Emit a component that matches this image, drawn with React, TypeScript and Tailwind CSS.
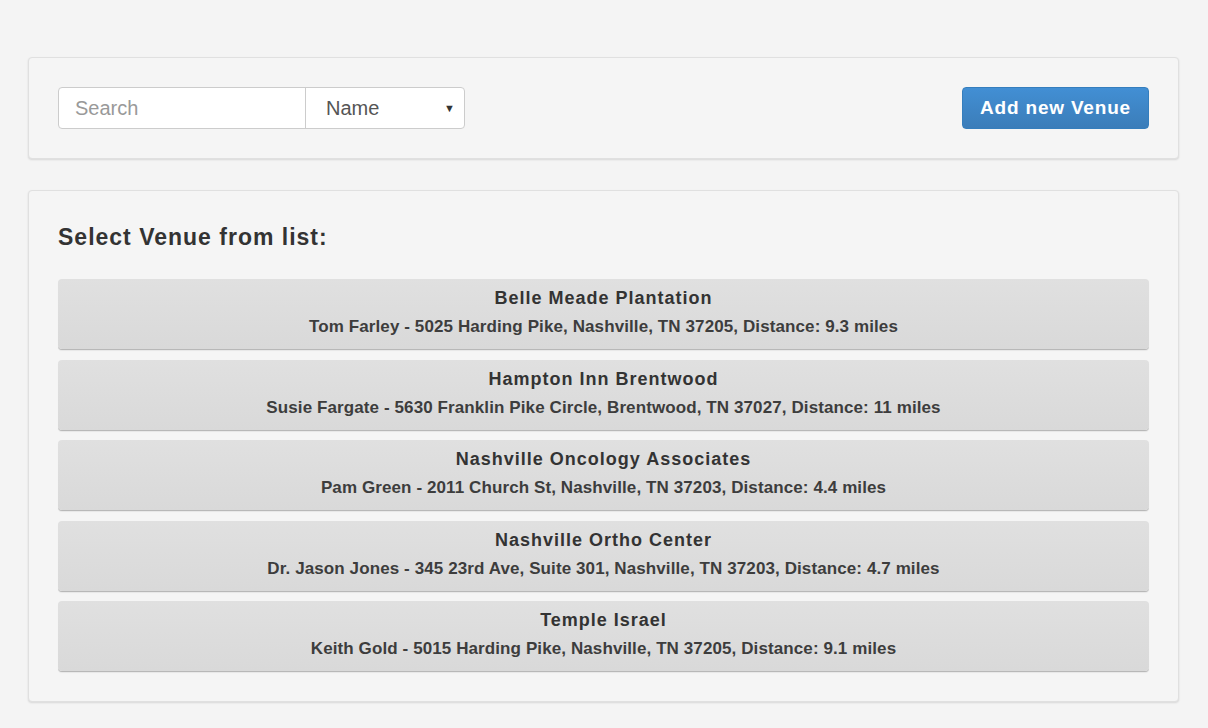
type Venue = {
  name: string
  detail: string
}

const venues: Venue[] = [
  {
    name: 'Belle Meade Plantation',
    detail: 'Tom Farley - 5025 Harding Pike, Nashville, TN 37205, Distance: 9.3 miles',
  },
  {
    name: 'Hampton Inn Brentwood',
    detail: 'Susie Fargate - 5630 Franklin Pike Circle, Brentwood, TN 37027, Distance: 11 miles',
  },
  {
    name: 'Nashville Oncology Associates',
    detail: 'Pam Green - 2011 Church St, Nashville, TN 37203, Distance: 4.4 miles',
  },
  {
    name: 'Nashville Ortho Center',
    detail: 'Dr. Jason Jones - 345 23rd Ave, Suite 301, Nashville, TN 37203, Distance: 4.7 miles',
  },
  {
    name: 'Temple Israel',
    detail: 'Keith Gold - 5015 Harding Pike, Nashville, TN 37205, Distance: 9.1 miles',
  },
]

const well =
  'rounded-[4px] border border-[#e0e0e0] bg-[#f5f5f5] shadow-[0_1px_2px_rgba(0,0,0,0.12)]'

function VenueRow({ venue }: { venue: Venue }) {
  return (
    <button
      type="button"
      className="flex h-[70px] w-full flex-col items-center justify-start rounded-[4px] bg-gradient-to-b from-[#e0e0e0] to-[#d9d9d9] pt-[8px] text-[#333] shadow-[0_1px_0_#b8b8b8,0_2px_1px_rgba(0,0,0,0.06)]"
    >
      <span className="text-[18px] font-bold leading-[22px] tracking-[1px]">{venue.name}</span>
      <span className="mt-[8px] text-[17px] font-bold leading-[20px] tracking-[0.1px] text-[#3d3d3d]">
        {venue.detail}
      </span>
    </button>
  )
}

export default function App() {
  return (
    <div className="min-h-[728px] bg-[#f4f4f4] pl-[28px] pr-[29px] pt-[57px] font-['Liberation_Sans',Arial,sans-serif]">
      <div className={`${well} flex items-center justify-between px-[29px] py-[29px]`}>
        <div className="flex h-[42px] w-[407px] rounded-[4px] border border-[#ccc] bg-white">
          <input
            placeholder="Search"
            className="h-full w-[247px] rounded-l-[4px] border-r border-[#ccc] px-[16px] text-[20px] text-[#555] outline-none placeholder:text-[#999]"
          />
          <div className="flex flex-1 items-center justify-between pl-[20px] pr-[9px] text-[20px] text-[#555]">
            <span>Name</span>
            <span className="text-[11px] text-[#333]">▼</span>
          </div>
        </div>
        <button
          type="button"
          className="h-[42px] w-[187px] rounded-[4px] border border-[#357ebd] bg-gradient-to-b from-[#428fd4] to-[#3b7db9] text-[19px] font-bold tracking-[0.8px] text-white"
        >
          Add new Venue
        </button>
      </div>

      <div className={`${well} mt-[31px] px-[29px] pb-[30px] pt-[32px]`}>
        <h2 className="mb-[28px] text-[23px] font-bold leading-[28px] tracking-[1px] text-[#333]">
          Select Venue from list:
        </h2>
        <div className="flex flex-col gap-[10.5px]">
          {venues.map((v) => (
            <VenueRow key={v.name} venue={v} />
          ))}
        </div>
      </div>
    </div>
  )
}
